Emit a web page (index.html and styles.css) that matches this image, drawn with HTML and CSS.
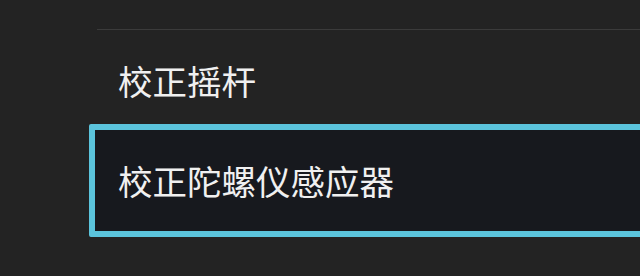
FILE: index.html
```html
<!DOCTYPE html>
<html lang="zh">
<head>
<meta charset="utf-8">
<link rel="stylesheet" href="styles.css">
</head>
<body>
<div class="screen">
  <div class="list">
    <div class="divider"></div>
    <div class="item">校正摇杆</div>
    <div class="item selected">校正陀螺仪感应器</div>
  </div>
</div>
</body>
</html>
```

FILE: styles.css
```css
html, body {
  margin: 0;
  padding: 0;
  background: #232323;
}
.screen {
  width: 640px;
  height: 276px;
  overflow: hidden;
  background: #232323;
  font-family: "Noto Sans CJK SC", "Noto Sans", sans-serif;
  color: #f0f0f0;
}
.list {
  display: flex;
  flex-direction: column;
  padding-top: 29px;
  padding-left: 89px;
  width: 600px;
}
.divider {
  height: 1px;
  background: #3b3b3b;
  margin-left: 8px;
}
.item {
  display: flex;
  align-items: center;
  height: 94px;
  padding-left: 29px;
  padding-top: 6px;
  font-size: 34.5px;
  font-weight: 400;
  line-height: 1;
  box-sizing: border-box;
}
.item.selected {
  height: 113px;
  padding-left: 23px;
  padding-top: 0;
  border: 6px solid #5bc4dc;
  border-radius: 2px;
  background: #17191e;
  padding-bottom: 0;
}
```
